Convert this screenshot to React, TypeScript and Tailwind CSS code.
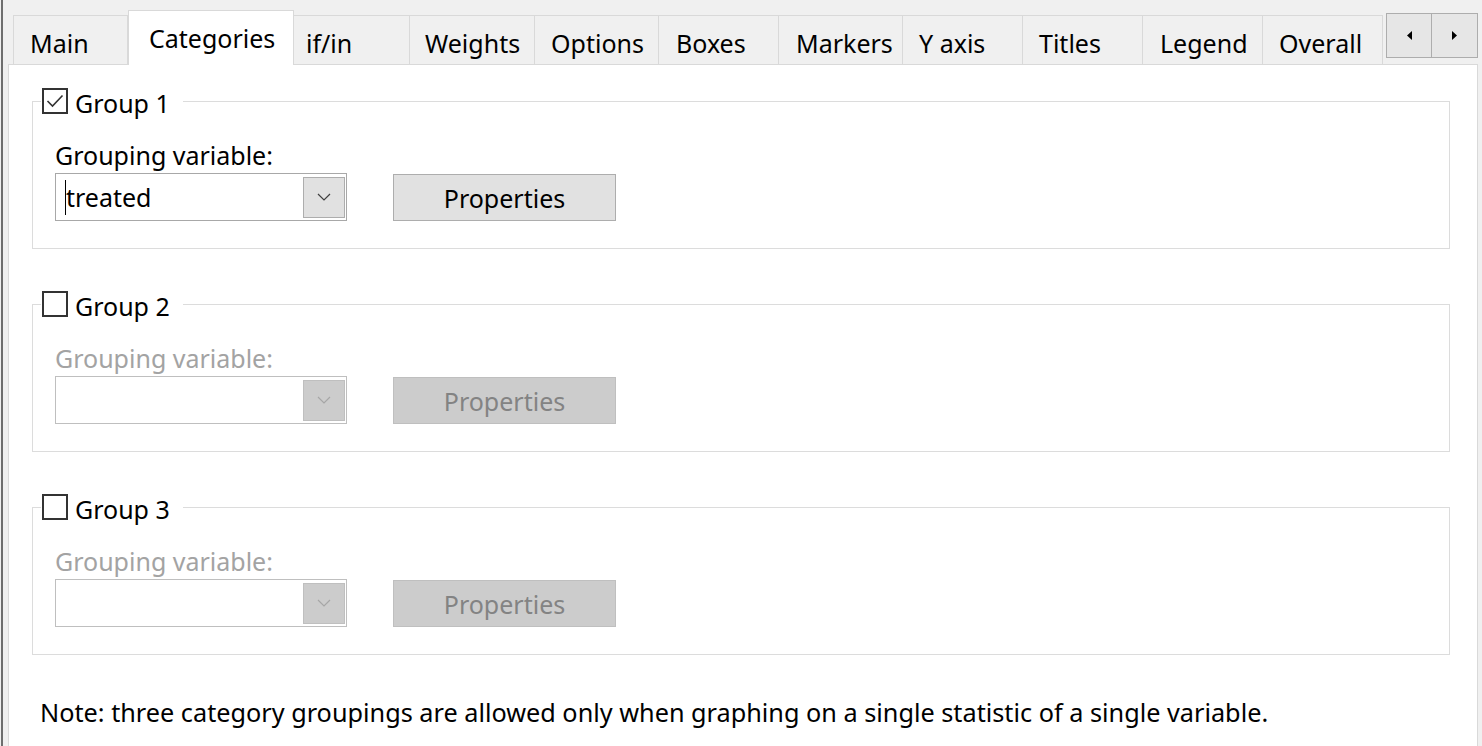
import { useState } from 'react';

const tabs = [
  { label: 'Main', w: 'w-[115px]', pad: 'pl-4' },
  { label: 'Categories', w: 'w-[166px]', pad: 'pl-5' },
  { label: 'if/in', w: 'w-[116px]', pad: 'pl-3' },
  { label: 'Weights', w: 'w-[125px]', pad: 'pl-[15px]' },
  { label: 'Options', w: 'w-[124px]', pad: 'pl-4' },
  { label: 'Boxes', w: 'w-[120px]', pad: 'pl-[17px]' },
  { label: 'Markers', w: 'w-[124px]', pad: 'pl-[17px]' },
  { label: 'Y axis', w: 'w-[120px]', pad: 'pl-4' },
  { label: 'Titles', w: 'w-[120px]', pad: 'pl-4' },
  { label: 'Legend', w: 'w-[120px]', pad: 'pl-[17px]' },
  { label: 'Overall', w: 'w-[120px]', pad: 'pl-4' },
];

function Chevron({ disabled }: { disabled?: boolean }) {
  return (
    <svg width="14" height="8" viewBox="0 0 14 8">
      <polyline
        points="1,1 7,7 13,1"
        fill="none"
        stroke={disabled ? '#a6a6a6' : '#404040'}
        strokeWidth="1.2"
      />
    </svg>
  );
}

function Checkbox({ checked, onToggle }: { checked: boolean; onToggle: () => void }) {
  return (
    <button
      onClick={onToggle}
      className="w-[26px] h-[26px] border-2 border-[#333333] bg-white flex items-center justify-center shrink-0"
    >
      {checked && (
        <svg width="18" height="14" viewBox="0 0 18 14">
          <polyline points="1.5,7 6.5,12 16.5,1.5" fill="none" stroke="#333333" strokeWidth="1.6" />
        </svg>
      )}
    </button>
  );
}

function GroupBox({ n, checked, onToggle, value }: { n: number; checked: boolean; onToggle: () => void; value?: string }) {
  const off = !checked;
  return (
    <fieldset className="border border-[#dcdcdc] pb-[27px]">
      <legend className="ml-[8px] pl-[1px] pr-[13px] h-[30px] flex items-center gap-[7px] bg-white">
        <Checkbox checked={checked} onToggle={onToggle} />
        <span className="leading-[30px] pt-[4px]">Group {n}</span>
      </legend>
      <div className="pl-[22px]">
        <div className={`pt-[24px] leading-[30px] ${off ? 'text-[#a3a3a3]' : 'text-black'}`}>Grouping variable:</div>
        <div className="flex items-center mt-[3px]">
          <div
            className={`w-[292px] h-[48px] border flex items-center pl-[9px] pr-[1px] bg-white ${
              off ? 'border-[#bfbfbf]' : 'border-[#a8a8a8]'
            }`}
          >
            <div className="flex-1 flex items-center h-full">
              {value && (
                <>
                  <span className="w-px h-[35px] bg-black" />
                  <span className="leading-[30px]">{value}</span>
                </>
              )}
            </div>
            <div
              className={`w-[42px] h-[41px] border flex items-center justify-center ${
                off ? 'bg-[#cccccc] border-[#bfbfbf]' : 'bg-[#e1e1e1] border-[#adadad]'
              }`}
            >
              <Chevron disabled={off} />
            </div>
          </div>
          <button
            className={`ml-[46px] w-[223px] h-[47px] border flex items-center justify-center pt-[4px] ${
              off ? 'bg-[#cccccc] border-[#bfbfbf] text-[#838383]' : 'bg-[#e1e1e1] border-[#adadad] text-black'
            }`}
          >
            Properties
          </button>
        </div>
      </div>
    </fieldset>
  );
}

export default function App() {
  const [groups, setGroups] = useState([true, false, false]);
  const toggle = (i: number) => setGroups(g => g.map((v, j) => (j === i ? !v : v)));

  return (
    <div className="w-[1482px] h-[746px] overflow-hidden bg-[#f0f0f0] pl-px font-['Noto_Sans','DejaVu_Sans',sans-serif] text-[25px] text-black">
      <div className="h-full border-l-2 border-[#6e6e6e] pl-[5px] pr-[4px] flex flex-col">
        {/* Tab strip */}
        <div className="h-[64px] flex items-end pl-[5px] shrink-0">
          {tabs.map(t =>
            t.label === 'Categories' ? (
              <div
                key={t.label}
                className={`${t.w} ${t.pad} h-[55px] -mb-px relative z-10 bg-white border border-b-0 border-[#d9d9d9] pt-[12px] leading-[30px] whitespace-nowrap`}
              >
                {t.label}
              </div>
            ) : (
              <div
                key={t.label}
                className={`${t.w} ${t.pad} h-[49px] bg-[#f0f0f0] border border-b-0 border-l-0 first:border-l border-[#d9d9d9] pt-[12px] leading-[30px] whitespace-nowrap`}
              >
                {t.label}
              </div>
            )
          )}
          <div className="self-start mt-[13px] ml-[3px] flex">
            <button className="w-[46px] h-[45px] border border-[#adadad] bg-[#e6e6e6] flex items-center justify-center">
              <svg width="5" height="9" viewBox="0 0 5 9"><polygon points="5,0 0,4.5 5,9" fill="#000" /></svg>
            </button>
            <button className="w-[46px] h-[45px] border border-l-0 border-[#adadad] bg-[#e6e6e6] flex items-center justify-center">
              <svg width="5" height="9" viewBox="0 0 5 9"><polygon points="0,0 5,4.5 0,9" fill="#000" /></svg>
            </button>
          </div>
        </div>

        {/* Panel */}
        <div className="flex-1 bg-white border border-b-0 border-[#d9d9d9] pl-[23px] pr-[27px] pt-[21px]">
          <div className="flex flex-col gap-[40px]">
            <GroupBox n={1} checked={groups[0]} onToggle={() => toggle(0)} value="treated" />
            <GroupBox n={2} checked={groups[1]} onToggle={() => toggle(1)} />
            <GroupBox n={3} checked={groups[2]} onToggle={() => toggle(2)} />
          </div>
          <p className="ml-[8px] mt-[42px] leading-[30px] whitespace-nowrap text-[25.25px]">
            Note: three category groupings are allowed only when graphing on a single statistic of a single variable.
          </p>
        </div>
      </div>
    </div>
  );
}
